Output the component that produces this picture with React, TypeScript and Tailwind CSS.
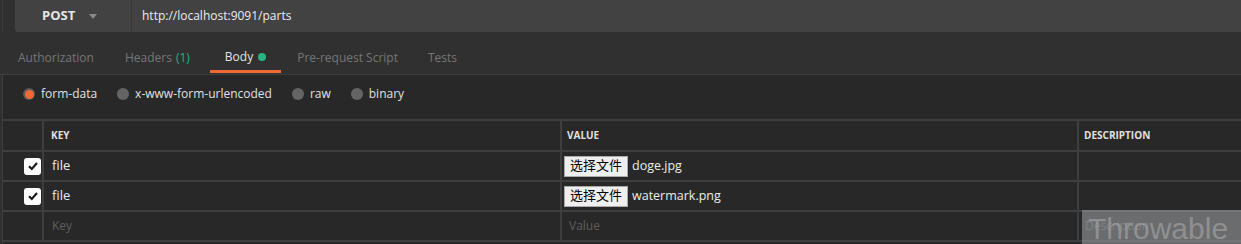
const font = { fontFamily: '"Open Sans", "Noto Sans CJK SC", sans-serif' };

const tabs = [
  { label: 'Authorization', cls: 'ml-[18px]' },
  { label: 'Headers', count: '(1)', cls: 'ml-[31px]' },
  { label: 'Body', active: true, cls: 'ml-[20px]' },
  { label: 'Pre-request Script', cls: 'ml-[16px]' },
  { label: 'Tests', cls: 'ml-[30px]' },
];

const radios = [
  { label: 'form-data', checked: true },
  { label: 'x-www-form-urlencoded' },
  { label: 'raw' },
  { label: 'binary' },
];

const rows = [
  { key: 'file', file: 'doge.jpg' },
  { key: 'file', file: 'watermark.png' },
];

function Check() {
  return (
    <div className="w-[17px] h-[17px] rounded-[3px] bg-white flex items-center justify-center">
      <svg width="12" height="12" viewBox="0 0 12 12">
        <path d="M2 6.2 L4.8 9 L10 3" fill="none" stroke="#1a1a1a" strokeWidth="2.2" />
      </svg>
    </div>
  );
}

export default function App() {
  return (
    <div className="relative w-[1241px] h-[244px] overflow-hidden bg-[#303030] text-[12px]" style={font}>
      {/* url bar */}
      <div className="flex h-[32px]">
        <div className="w-[13px] border-l border-[#3a3a3a] ml-[2px]" />
        <div className="w-[116px] bg-[#424242] rounded-bl-[3px] flex items-center pl-[27px] gap-[14px]">
          <span className="font-bold text-[13px] text-[#e6e6e6]">POST</span>
          <svg width="8" height="5" viewBox="0 0 8 5">
            <path d="M0 0 H8 L4 5 Z" fill="#8a8a8a" />
          </svg>
        </div>
        <div className="flex-1 bg-[#424242] border-l border-[#383838] flex items-center pl-[10px] text-[#ececec]">
          http://localhost:9091/parts
        </div>
      </div>

      {/* tabs */}
      <div className="mt-[8px] h-[35px] border-b border-[#3e3e3e] flex">
        {tabs.map((t) => (
          <div
            key={t.label}
            className={
              t.active
                ? `${t.cls} flex items-center px-[15px] text-[#e4e4e4] border-b-[3px] border-[#f06a35] h-[33px] pt-[3px]`
                : `${t.cls} flex items-center text-[#767676] h-[33px] pt-[3px]`
            }
          >
            {t.label}
            {t.count && <span className="ml-[4px] text-[#26b47f]">{t.count}</span>}
            {t.active && <span className="ml-[5px] w-[8px] h-[8px] rounded-full bg-[#26b47f]" />}
          </div>
        ))}
      </div>

      {/* body */}
      <div className="ml-[2px] border-l border-[#3e3e3e] bg-[#282828] h-[210px]">
        <div className="flex items-center h-[43px] pl-[20px] pb-[5px] gap-[20px] text-[#e0e0e0]">
          {radios.map((r) => (
            <div key={r.label} className="flex items-center gap-[6px]">
              {r.checked ? (
                <span className="w-[12px] h-[12px] rounded-full bg-[#5a5a5a] flex items-center justify-center">
                  <span className="w-[9px] h-[9px] rounded-full bg-[#f06a35]" />
                </span>
              ) : (
                <span className="w-[12px] h-[12px] rounded-full bg-[#646464]" />
              )}
              <span>{r.label}</span>
            </div>
          ))}
        </div>

        <div className="mt-[1px] grid grid-cols-[39px_516px_515px_1fr] gap-[2px] bg-[#3e3e3e] pt-[2px] pb-[2px]">
          <div className="bg-[#282828] h-[29px]" />
          <div className="bg-[#282828] h-[29px] flex items-center pl-[7px] text-[10px] font-bold text-[#e0e0e0]">KEY</div>
          <div className="bg-[#282828] h-[29px] flex items-center pl-[5px] text-[10px] font-bold text-[#e0e0e0]">VALUE</div>
          <div className="bg-[#282828] h-[29px] flex items-center pl-[5px] text-[10px] font-bold text-[#e0e0e0]">DESCRIPTION</div>

          {rows.map((r, i) => (
            <div key={i} className="contents">
              <div className="bg-[#282828] h-[28px] flex items-center justify-end pr-[1px]">
                <Check />
              </div>
              <div className="bg-[#282828] h-[28px] flex items-center pl-[8px] text-[13px] text-[#ececec]">{r.key}</div>
              <div className="bg-[#282828] h-[28px] flex items-center pl-[2px] gap-[4px] text-[#ececec]">
                <span className="h-[21px] w-[64px] bg-[#efefef] border border-[#a9a9a9] text-black flex items-center justify-center text-[13px]">
                  选择文件
                </span>
                <span className="text-[12.5px]">{r.file}</span>
              </div>
              <div className="bg-[#282828] h-[28px]" />
            </div>
          ))}

          <div className="bg-[#282828] h-[28px]" />
          <div className="bg-[#282828] h-[28px] flex items-center pl-[8px] text-[#5e5e5e]">Key</div>
          <div className="bg-[#282828] h-[28px] flex items-center pl-[7px] text-[#5e5e5e]">Value</div>
          <div className="bg-[#282828] h-[28px] flex items-center pl-[6px] text-[#5e5e5e]">Description</div>
        </div>
      </div>

      {/* watermark */}
      <div
        className="absolute left-[1082px] top-[210px] w-[160px] h-[34px] bg-[#a2a4a6]/55 overflow-hidden text-[30px] leading-[38px] text-[#a8aaac]/60 pl-[6px] whitespace-nowrap"
        style={{ fontFamily: '"Liberation Sans", Arial, sans-serif' }}
      >
        Throwable
      </div>
    </div>
  );
}
